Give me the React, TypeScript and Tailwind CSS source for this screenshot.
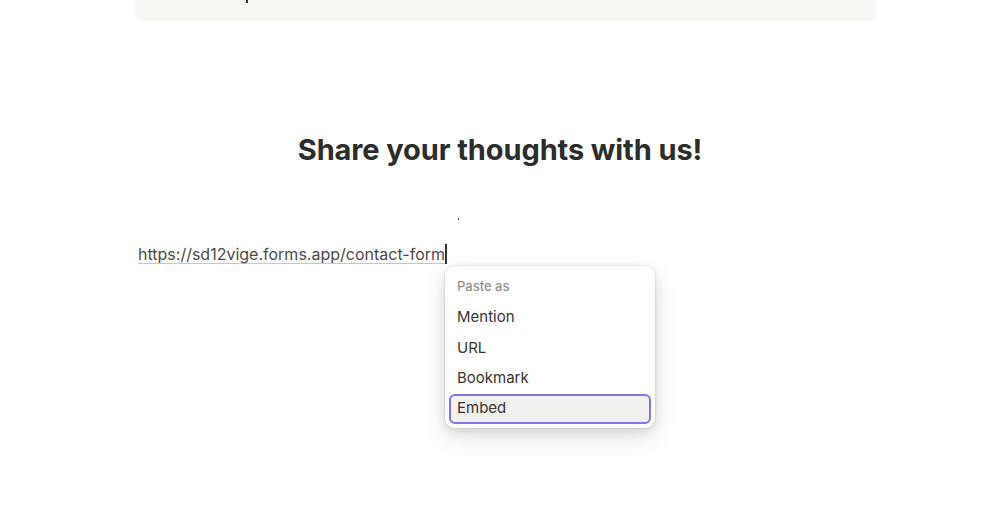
import React from "react";

const items = ["Mention", "URL", "Bookmark", "Embed"];

const PasteMenu = ({ active }: { active: string }) => (
	<div className="absolute left-[310px] top-[25px] w-[210px] rounded-[10px] bg-white py-[4px] shadow-[0_0_0_1px_rgba(15,15,15,0.05),0_3px_10px_rgba(15,15,15,0.1),0_9px_24px_rgba(15,15,15,0.12)]">
		<div className="px-[12px] pt-[6px] pb-[6px] text-[13px] font-medium leading-[20px] text-[#91918e]">
			Paste as
		</div>
		<div className="flex flex-col px-[4px]">
			{items.map((item) =>
				item === active ? (
					<div
						key={item}
						className="flex h-[30px] items-center rounded-[6px] border-2 border-[#8373e6] bg-[#f1f1ef] px-[6px] text-[15px] text-[#37352f]"
					>
						{item}
					</div>
				) : (
					<div
						key={item}
						className="flex h-[30.5px] items-center px-[8px] text-[15px] text-[#37352f]"
					>
						{item}
					</div>
				),
			)}
		</div>
	</div>
);

export default function App() {
	return (
		<div className="h-[516px] w-[1000px] overflow-hidden bg-white font-['Inter','Noto_Sans',sans-serif] text-[#37352f]">
			<div className="ml-[135px] w-[741px]">
				<div className="relative h-[21px] rounded-b-[8px] bg-[#f7f6f3]">
					<span className="absolute left-[111px] top-0 h-[3px] w-[2px] bg-[#37352f]" />
				</div>
			</div>

			<h1 className="mt-[109px] text-center text-[29px] font-bold leading-[40px] tracking-[-0.1px] text-[#2c2c2b]">
				Share your thoughts with us!
			</h1>

			<div className="ml-[135px] w-[741px]">
				<div className="relative mt-[48px] h-[3px]">
					<span className="absolute left-[323px] top-0 h-[2px] w-[1px] bg-[#555]" />
				</div>

				<div className="relative mt-[20px] px-[3px]">
					<div className="flex items-center">
						<span className="text-[16px] leading-[26px] text-[#4b4a47] underline decoration-[#c7c6c3] decoration-1 underline-offset-[3px]">
							https://sd12vige.forms.app/contact-form
						</span>
						<span className="h-[20px] w-[1.5px] bg-[#37352f]" />
					</div>
					<PasteMenu active="Embed" />
				</div>
			</div>
		</div>
	);
}
